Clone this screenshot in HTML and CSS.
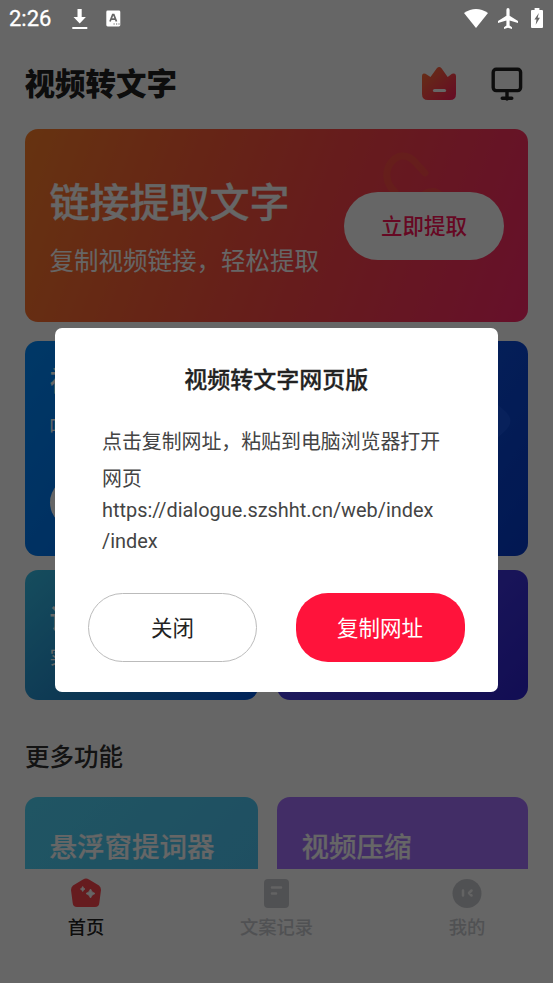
FILE: index.html
```html
<!DOCTYPE html>
<html lang="zh-CN">
<head>
<meta charset="utf-8">
<title>视频转文字</title>
<link rel="stylesheet" href="styles.css">
</head>
<body>
<div class="app">
  <header class="header">
    <h1>视频转文字</h1>
    <div class="header-icons">
      <svg width="36" height="36" viewBox="0 0 36 36">
        <defs><linearGradient id="crown" x1="0" y1="0" x2="1" y2="1"><stop offset="0" stop-color="#ff7a35"/><stop offset="1" stop-color="#ff1a5c"/></linearGradient></defs>
        <path d="M1 10.5Q1 6.5 4.5 7.8L9.5 11 15.8 2.3Q18.2-.2 20.5 2.3L26.7 11 31 7.8Q35 6.5 35 10.5V28Q35 34 29 34H7Q1 34 1 28Z" fill="url(#crown)"/>
        <path d="M13.5 24.5h10" stroke="#fff" stroke-width="3.2" stroke-linecap="round"/>
      </svg>
      <svg class="monitor" width="32" height="34" viewBox="0 0 32 34" fill="none" stroke="#222" stroke-width="3.4" stroke-linecap="round">
        <rect x="2.2" y="2.2" width="27.4" height="21.4" rx="3"/><path d="M16 24v8M11.2 31.3h9.6"/>
      </svg>
    </div>
  </header>

  <main class="content">
    <section class="card hero">
      <div class="hero-copy"><h2>链接提取文字</h2><p>复制视频链接，轻松提取</p></div>
      <svg class="hero-link" width="66" height="60" viewBox="0 0 66 60" fill="none" stroke="#ff7529" stroke-width="7" stroke-linecap="round" opacity=".25"><path d="M14 40C-7 21 17-9 34 10l10 11M41 45c5-7 14-7 19-1"/></svg>
      <button class="hero-button">立即提取</button>
    </section>
    <section class="card local">
      <h3>视</h3><p>吐</p><span class="local-button"></span>
      <svg class="local-shape" width="100" height="80" viewBox="0 0 100 80"><path d="M48 8Q58-2 68 8L94 32Q101 40 94 48L66 75H20Z" fill="#1f60f0" opacity=".5"/></svg>
    </section>
    <div class="grid tools">
      <section class="card voice"><h3>语</h3><p>实</p></section>
      <section class="card extract"></section>
    </div>
    <h2 class="section-title">更多功能</h2>
    <div class="grid more">
      <section class="card prompter"><h3>悬浮窗提词器</h3></section>
      <section class="card compress"><h3>视频压缩</h3></section>
    </div>
  </main>

  <nav class="tabs">
    <a class="tab active">
      <svg width="32" height="32" viewBox="0 0 32 32"><path d="M13 1.5Q16-.5 19 1.5L29 7.5Q31 9 31 12L29.3 25Q29 29 25 29H7Q3 29 2.7 25L1 12Q1 9 3 7.5Z" fill="#ff464f"/><path d="M20.5 11Q21.5 14.5 25 15.5 21.5 16.5 20.5 20 19.5 16.5 16 15.5 19.5 14.5 20.5 11ZM12.7 8.5Q13.2 10.5 15 11 13.2 11.5 12.7 13.5 12.2 11.5 10.4 11 12.2 10.5 12.7 8.5Z" fill="#fff" stroke="#fff" stroke-width=".8"/></svg>
      <span>首页</span>
    </a>
    <a class="tab">
      <svg width="32" height="32" viewBox="0 0 32 32"><rect x="3" y="1" width="25" height="29" rx="4" fill="#c9cbd0"/><path d="M11 9.5h9M11 15.5h4" stroke="#f7f7f7" stroke-width="2.5" stroke-linecap="round"/></svg>
      <span>文案记录</span>
    </a>
    <a class="tab">
      <svg width="32" height="32" viewBox="0 0 32 32"><circle cx="16" cy="15.5" r="14.5" fill="#c9cbd0"/><path d="M12 12.5v5M20.5 12.5l-2.5 2.5 2.5 2.5" fill="none" stroke="#f7f7f7" stroke-width="2.5" stroke-linecap="round" stroke-linejoin="round"/></svg>
      <span>我的</span>
    </a>
  </nav>
</div>

<div class="overlay">
  <div class="dialog">
    <h2>视频转文字网页版</h2>
    <div class="message"><p>点击复制网址，粘贴到电脑浏览器打开网页</p><p class="url">https://dialogue.szshht.cn/web/index<wbr>/index</p></div>
    <div class="actions"><button class="close">关闭</button><button class="copy">复制网址</button></div>
  </div>
</div>

<div class="status">
  <time>2:26</time>
  <svg class="download" width="16" height="22" viewBox="0 0 16 22" fill="#fff"><path d="M5.5 1h4.2v8h4.2L7.7 15.5 1.5 9h4z"/><path d="M.3 19h15v2H.3z"/></svg>
  <svg class="letter" width="15" height="17" viewBox="0 0 15 17"><rect x=".3" y=".5" width="14" height="16" rx="1.4" fill="#fff"/><path d="M4 11.5 6.7 4.7h1.1l2.7 6.8M5.2 9.2h4.1" fill="none" stroke="#666" stroke-width="1.7"/><path d="M7.5 14h1.2M10 14h1.2M12.4 14h1.2" stroke="#666" stroke-width="1.2"/></svg>
  <div class="system">
    <svg width="24" height="19" viewBox="0 0 24 19"><path d="M0 4Q12-4 24 4L12 19Z" fill="#fff"/></svg>
    <svg width="20" height="21" viewBox="0 0 20 21"><path d="M10 0Q11.6 0 11.6 2v5.8L20 13v2l-8.4-2.6v5l2.4 1.8V21l-4-1.2L6 21v-1.8l2.4-1.8v-5L0 15v-2l8.4-5.2V2Q8.4 0 10 0Z" fill="#fff"/></svg>
    <svg class="battery" width="12" height="20" viewBox="0 0 12 20"><path d="M3.6 0h4.8v2H11q1 0 1 1v16q0 1-1 1H1q-1 0-1-1V3q0-1 1-1h2.6z" fill="#fff"/><path d="M7.8 5 3.4 11.4h2.1L4.7 16.8l4.2-7H6.7z" fill="#666"/></svg>
  </div>
</div>
</body>
</html>
```

FILE: styles.css
```css
* { box-sizing: border-box; }
body { margin: 0; width: 553px; height: 983px; overflow: hidden; background: #fff; font-family: Roboto, "Noto Sans CJK SC", sans-serif; }
h1, h2, h3, p { margin: 0; }
button { font-family: inherit; padding: 0; border: 0; }
svg { display: block; flex: none; }
.app { height: 983px; display: flex; flex-direction: column; }
.header { height: 129px; flex: none; padding: 66px 30px 0 24.5px; display: flex; justify-content: space-between; }
.header h1 { font-size: 30.5px; line-height: 37px; font-weight: 900; color: #222; }
.header-icons { display: flex; gap: 34px; }
.monitor { margin-top: 1px; }
.content { height: 740px; flex: none; overflow: hidden; padding: 0 25px; }
.card { border-radius: 13px; color: #fff; position: relative; overflow: hidden; }
.hero { height: 193px; padding: 0 24px 0 24.5px; display: flex; align-items: center; justify-content: space-between; background: linear-gradient(110deg, #ff802a, #ff5c38 33%, #ff4648 58%, #ff286a); }
.hero h2 { font-size: 40px; line-height: 48px; font-weight: 500; white-space: nowrap; -webkit-text-stroke: .3px #fff; }
.hero p { font-size: 24.5px; line-height: 34px; margin-top: 17px; font-weight: 400; white-space: nowrap; }
.hero-copy { padding-top: 8px; }
.hero-link { position: absolute; left: 356px; top: 23px; }
.hero-button { position: relative; width: 160px; height: 68px; padding-bottom: 2px; border-radius: 34px; background: #fff; color: #ff1659; font-size: 21.5px; font-weight: 500; }
.local { height: 215px; margin-top: 19px; padding: 23px 24.5px; background: linear-gradient(125deg, #008cff, #007af5 25%, #0a4bda 75%, #063ccd); }
.card h3 { font-size: 27.5px; line-height: 36px; font-weight: 500; -webkit-text-stroke: .2px #fff; }
.local p { font-size: 19px; line-height: 26px; margin-top: 15px; }
.local-button { display: block; width: 130px; height: 51px; margin-top: 36px; border-radius: 26px; background: #fff; }
.local-shape { position: absolute; right: 15px; top: 40px; }
.grid { display: grid; grid-template-columns: 233px 251px; gap: 19px; }
.tools { margin-top: 14px; }
.tools .card { height: 130px; padding: 32px 24.5px; }
.voice { background: linear-gradient(135deg, #37c0ea, #238ed0 45%, #0057e0); }
.voice p { font-size: 19px; line-height: 26px; margin-top: 7px; font-weight: 400; }
.extract { background: linear-gradient(135deg, #6258f5, #4238e0 50%, #2d22d0); }
.section-title { font-size: 24.5px; line-height: 36px; margin-top: 40px; font-weight: 500; color: #303030; }
.more { margin-top: 21px; }
.more .card { height: 130px; padding: 33px 24.5px; }
.prompter { background: linear-gradient(135deg, #50d5f8, #4dc2f2); }
.compress { background: #a572ff; }
.tabs { height: 114px; display: grid; grid-template-columns: 172px 209px 172px; padding-top: 9px; background: #fff; }
.tab { display: flex; flex-direction: column; align-items: center; gap: 4px; color: #c9cbd0; font-size: 18.3px; line-height: 28px; font-weight: 500; }
.tab.active { color: #222; }
.overlay { position: absolute; inset: 0; padding: 328px 55px 0; background: rgba(0, 0, 0, .6); }
.dialog { width: 443px; height: 364px; border-radius: 7px; background: #fff; color: #222; padding: 36px 33.5px 30.5px 33px; display: flex; flex-direction: column; }
.dialog h2 { font-size: 23px; line-height: 34px; font-weight: 500; text-align: center; -webkit-text-stroke: .3px #222; }
.message { margin: 26px 6px 0 14px; color: #444; font-size: 19.9px; line-height: 37px; }
.url { margin-top: -3px; line-height: 31px; }
.actions { margin-top: auto; display: flex; justify-content: space-between; }
.actions button { width: 169px; height: 69px; border-radius: 35px; font-size: 21.5px; padding-bottom: 1px; }
.actions .close { border: 1.8px solid #bbb; background: #fff; color: #222; }
.actions .copy { background: #ff133b; color: #fff; border-radius: 32px; }
.status { position: absolute; inset: 0 0 auto; height: 38px; padding: 0 10px 0 9px; display: flex; align-items: center; color: #fff; }
.status time { font-size: 22px; line-height: 26px; font-weight: 400; -webkit-text-stroke: .3px #fff; width: 63px; }
.download { margin-top: -1px; }
.letter { margin-left: 18px; margin-top: -1px; }
.system { margin-left: auto; margin-top: -2px; display: flex; align-items: center; gap: 10px; }
.battery { margin: -1px 0 0 3px; }
```
